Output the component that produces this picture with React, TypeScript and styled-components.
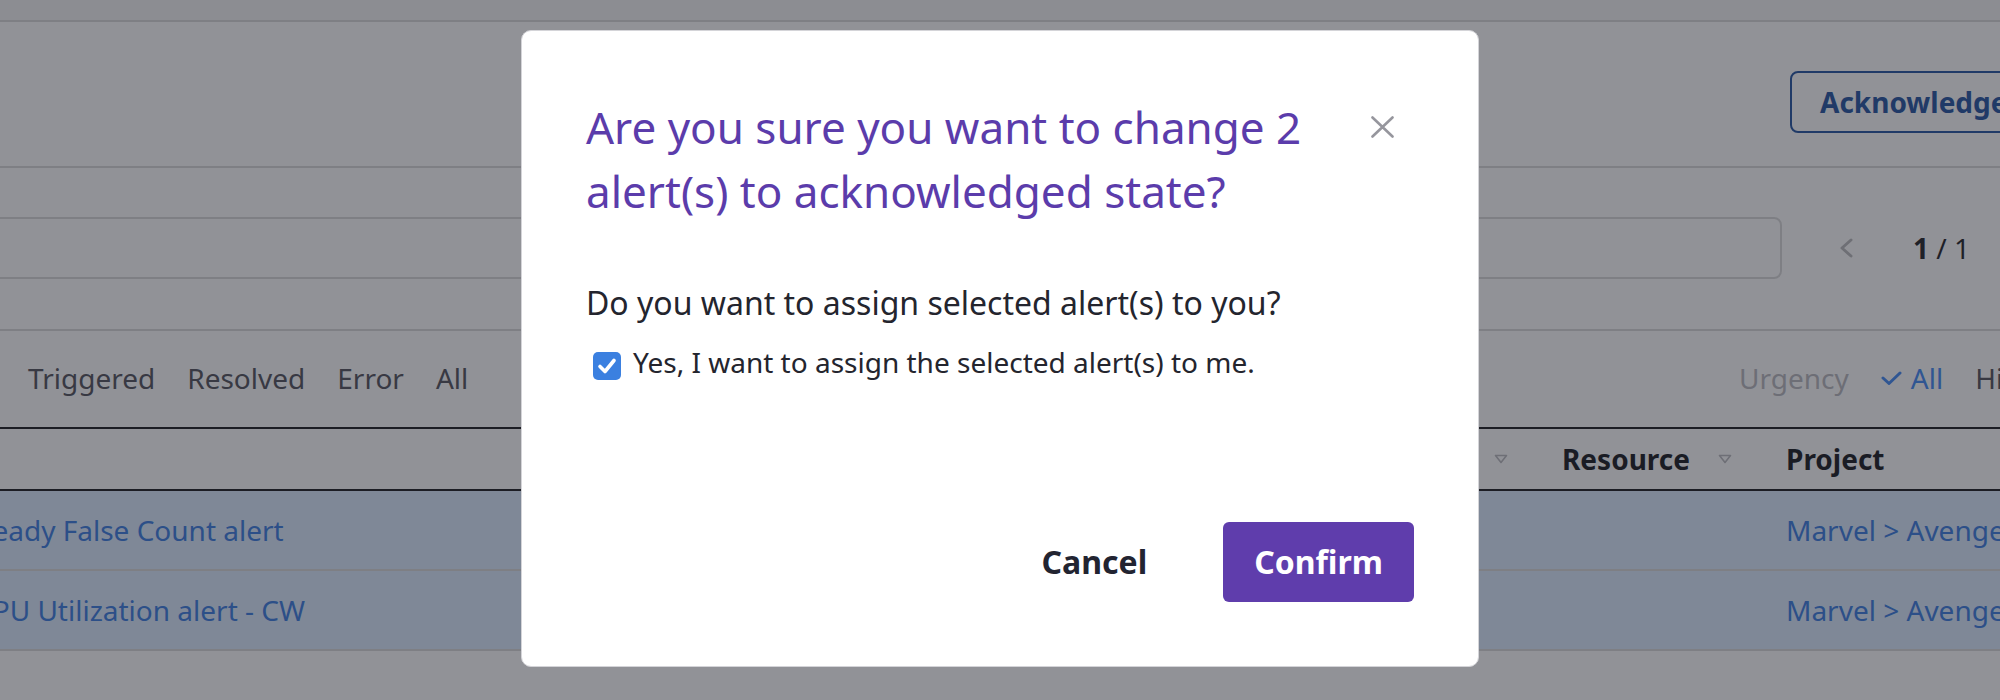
import React from "react";
import styled, { createGlobalStyle } from "styled-components";

const GlobalStyle = createGlobalStyle`
  *, *::before, *::after { box-sizing: border-box; }
  html, body { margin: 0; padding: 0; background: #ffffff; overflow: hidden; }
  body { font-family: "Noto Sans", "Open Sans", sans-serif; }
  button { font-family: inherit; }
`;

/* ---------- background page ---------- */

const Viewport = styled.div`
  position: relative;
  width: 2000px;
  height: 700px;
  overflow: hidden;
  background: #ffffff;
`;

const Page = styled.div`
  width: 2400px;
  margin-left: -49px;
  font-size: 28px;
  line-height: 40px;
  color: #55555d;
`;

const TopStrip = styled.div`
  height: 22px;
  background: #f5f5f5;
  border-bottom: 2px solid #d9d9d9;
`;

const ActionBar = styled.div`
  height: 146px;
  display: flex;
  align-items: flex-start;
  padding-top: 49px;
  border-bottom: 2px solid #d9d9d9;
`;

const ActionSpacer = styled.div`
  flex: 1;
`;

const ActionGroup = styled.div`
  flex: 0 0 561px;
  display: flex;
  gap: 24px;
`;

const OutlineButton = styled.button`
  height: 62px;
  padding: 0 28px;
  border: 2px solid #1d4f9e;
  border-radius: 8px;
  background: #ffffff;
  color: #1d4f9e;
  font-size: 28px;
  font-weight: 700;
  line-height: 58px;
  white-space: nowrap;
`;

const SearchRow = styled.div`
  height: 163px;
  display: flex;
  align-items: flex-start;
  padding-top: 49px;
  border-bottom: 2px solid #d9d9d9;
`;

const SearchInput = styled.div`
  flex: 1;
  height: 62px;
  border: 2px solid #d9d9d9;
  border-radius: 8px;
  background: #ffffff;
`;

const Pager = styled.div`
  flex: 0 0 512px;
  margin-left: 57px;
  height: 62px;
  display: flex;
  align-items: center;
  gap: 60px;
  color: #1a1a1f;
  font-size: 28px;
`;

const PageCount = styled.span`
  white-space: nowrap;
  b { font-weight: 700; }
`;

const FilterRow = styled.div`
  height: 96px;
  display: flex;
  align-items: flex-start;
  padding-top: 27px;
`;

const FilterGroup = styled.div`
  flex: 1;
  display: flex;
  gap: 32px;
  padding-left: 77px;
`;

const UrgencyGroup = styled.div`
  flex: 0 0 612px;
  display: flex;
  align-items: center;
  gap: 32px;
`;

const FilterLabel = styled.span`
  color: #b7b7bd;
  white-space: nowrap;
`;

const FilterOption = styled.span<{ $active?: boolean }>`
  display: inline-flex;
  align-items: center;
  gap: 9px;
  white-space: nowrap;
  color: ${(p) => (p.$active ? "#3d86f5" : "#4d4d56")};
`;

const Table = styled.div`
  display: grid;
  grid-template-columns: 1340px 247px 224px 1fr;
`;

const HeadCell = styled.div`
  height: 64px;
  display: flex;
  align-items: center;
  justify-content: space-between;
  padding: 0 30px 0 24px;
  border-top: 2px solid #151519;
  border-bottom: 2px solid #151519;
  color: #111318;
  font-weight: 700;
  white-space: nowrap;
`;

const Cell = styled.div`
  height: 80px;
  display: flex;
  align-items: center;
  padding: 0 24px;
  background: #dbebff;
  border-bottom: 2px solid #d9d9d9;
  white-space: nowrap;
  overflow: hidden;
`;

const Link = styled.span`
  color: #3579e1;
`;

/* ---------- dialog ---------- */

const Overlay = styled.div`
  position: fixed;
  inset: 0;
  background: rgba(35, 37, 47, 0.5);
  display: flex;
  justify-content: center;
  align-items: flex-start;
  padding-top: 30px;
`;

const Dialog = styled.div`
  width: 958px;
  height: 637px;
  display: flex;
  flex-direction: column;
  padding: 64px;
  background: #ffffff;
  border: 1px solid #d4d4d8;
  border-radius: 10px;
  font-family: "Noto Sans", "Open Sans", sans-serif;
`;

const DialogHeader = styled.div`
  display: flex;
  align-items: flex-start;
  gap: 24px;
`;

const DialogTitle = styled.h2`
  flex: 1;
  margin: 0;
  font-size: 44px;
  line-height: 64px;
  font-weight: 400;
  color: #5b3cab;
`;

const CloseButton = styled.button`
  flex: 0 0 62px;
  height: 64px;
  padding: 0 2px 0 0;
  border: 0;
  background: transparent;
  display: flex;
  align-items: center;
  justify-content: center;
`;

const Question = styled.p`
  margin: 56px 0 0;
  font-size: 32px;
  line-height: 48px;
  color: #24252e;
`;

const CheckRow = styled.label`
  margin-top: 15px;
  display: flex;
  align-items: flex-start;
  gap: 12px;
  font-size: 28px;
  line-height: 40px;
  color: #24252e;
`;

const CheckBox = styled.span`
  flex: 0 0 28px;
  width: 28px;
  height: 28px;
  margin: 10px 0 0 7px;
  border-radius: 5px;
  background: #3b80e0;
  display: flex;
  align-items: center;
  justify-content: center;
`;

const DialogFooter = styled.div`
  margin-top: auto;
  display: flex;
  justify-content: flex-end;
  gap: 45px;
`;

const FooterButton = styled.button<{ $primary?: boolean }>`
  height: 80px;
  padding: 0 31px;
  border: 0;
  border-radius: 6px;
  font-size: 32px;
  font-weight: 700;
  line-height: 80px;
  background: ${(p) => (p.$primary ? "#5f3dac" : "transparent")};
  color: ${(p) => (p.$primary ? "#ffffff" : "#222431")};
`;

/* ---------- icons ---------- */

const ChevronLeft = () => (
  <svg width="14" height="20" viewBox="0 0 14 20" fill="none">
    <polyline points="12,2 3,10 12,18" stroke="#b9b9bb" strokeWidth="3" strokeLinecap="round" strokeLinejoin="round" />
  </svg>
);

const Tick = () => (
  <svg width="21" height="14" viewBox="0 0 21 14" fill="none">
    <polyline points="2,7 8,12.5 19,2" stroke="#3d86f5" strokeWidth="3" strokeLinecap="round" strokeLinejoin="round" />
  </svg>
);

const SortTriangle = () => (
  <svg width="14" height="10" viewBox="0 0 14 10" fill="none">
    <polygon points="1.5,1.5 12.5,1.5 7,8.5" stroke="#b8b8bd" strokeWidth="1.6" strokeLinejoin="round" />
  </svg>
);

const CloseIcon = () => (
  <svg width="23" height="22" viewBox="0 0 23 22" fill="none">
    <path d="M1.5 1.5 L21.5 20.5 M21.5 1.5 L1.5 20.5" stroke="#96969d" strokeWidth="2.6" strokeLinecap="round" />
  </svg>
);

const CheckMark = () => (
  <svg width="22" height="22" viewBox="0 0 22 22" fill="none">
    <polyline points="4,11.5 9,16.5 18,5.5" stroke="#ffffff" strokeWidth="3.6" strokeLinecap="round" strokeLinejoin="round" />
  </svg>
);

const rows = [
  { name: "Ready False Count alert", project: "Marvel > Avengers" },
  { name: "CPU Utilization alert - CW", project: "Marvel > Avengers" },
];

export default function App() {
  return (
    <>
      <GlobalStyle />
      <Viewport>
        <Page>
          <TopStrip />
          <ActionBar>
            <ActionSpacer />
            <ActionGroup>
              <OutlineButton>Acknowledge</OutlineButton>
              <OutlineButton>Resolve</OutlineButton>
            </ActionGroup>
          </ActionBar>
          <SearchRow>
            <SearchInput />
            <Pager>
              <ChevronLeft />
              <PageCount>
                <b>1</b> / 1
              </PageCount>
            </Pager>
          </SearchRow>
          <FilterRow>
            <FilterGroup>
              <FilterOption>Triggered</FilterOption>
              <FilterOption>Resolved</FilterOption>
              <FilterOption>Error</FilterOption>
              <FilterOption>All</FilterOption>
            </FilterGroup>
            <UrgencyGroup>
              <FilterLabel>Urgency</FilterLabel>
              <FilterOption $active>
                <Tick />
                All
              </FilterOption>
              <FilterOption>High</FilterOption>
              <FilterOption>Low</FilterOption>
            </UrgencyGroup>
          </FilterRow>
          <Table>
            <HeadCell aria-label="Alert" />
            <HeadCell>
              <span />
              <SortTriangle />
            </HeadCell>
            <HeadCell>
              <span>Resource</span>
              <SortTriangle />
            </HeadCell>
            <HeadCell>
              <span>Project</span>
            </HeadCell>
            {rows.map((r) => (
              <React.Fragment key={r.name}>
                <Cell>
                  <Link>{r.name}</Link>
                </Cell>
                <Cell />
                <Cell />
                <Cell>
                  <Link>{r.project}</Link>
                </Cell>
              </React.Fragment>
            ))}
          </Table>
        </Page>
        <Overlay>
          <Dialog role="dialog" aria-modal="true">
            <DialogHeader>
              <DialogTitle>Are you sure you want to change 2 alert(s) to acknowledged state?</DialogTitle>
              <CloseButton aria-label="Close">
                <CloseIcon />
              </CloseButton>
            </DialogHeader>
            <Question>Do you want to assign selected alert(s) to you?</Question>
            <CheckRow>
              <CheckBox>
                <CheckMark />
              </CheckBox>
              <span>Yes, I want to assign the selected alert(s) to me.</span>
            </CheckRow>
            <DialogFooter>
              <FooterButton>Cancel</FooterButton>
              <FooterButton $primary>Confirm</FooterButton>
            </DialogFooter>
          </Dialog>
        </Overlay>
      </Viewport>
    </>
  );
}
